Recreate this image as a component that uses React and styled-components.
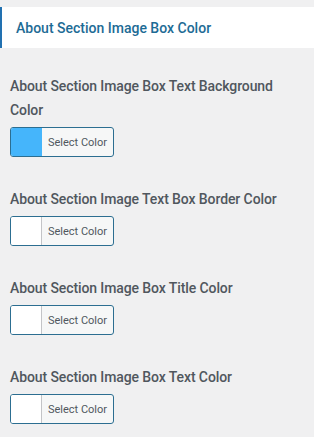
import React from "react";
import styled, { createGlobalStyle } from "styled-components";

const Global = createGlobalStyle`
  html, body {
    margin: 0;
    padding: 0;
    background: #f0f0f1;
  }
  body {
    font-family: Roboto, "Liberation Sans", Arial, sans-serif;
  }
`;

const Panel = styled.div`
  width: 314px;
  min-height: 437px;
  padding-top: 7px;
  box-sizing: border-box;
  background: #f0f0f1;
`;

const SectionHeader = styled.h3`
  margin: 0;
  height: 41px;
  display: flex;
  align-items: center;
  padding-left: 14px;
  background: #fff;
  border-left: 2px solid #2271b1;
  color: #1d6b95;
  font-size: 14px;
  font-weight: 500;
`;

const Controls = styled.div`
  display: flex;
  flex-direction: column;
  gap: 30px;
  padding: 26px 10px 0;
`;

const Control = styled.div`
  display: flex;
  flex-direction: column;
  align-items: flex-start;
  gap: 5px;
`;

const Label = styled.label`
  font-size: 14px;
  line-height: 24px;
  font-weight: 500;
  letter-spacing: -0.1px;
  color: #50575e;
  padding-right: 20px;
`;

const ColorButton = styled.button`
  display: flex;
  align-items: stretch;
  width: 104px;
  height: 30px;
  padding: 0;
  border: 1px solid #2c6e91;
  border-radius: 3px;
  background: #f6f7f7;
  overflow: hidden;
  cursor: pointer;
`;

const Swatch = styled.span`
  width: 30px;
  flex-shrink: 0;
  background: ${(p) => p.color || "#fff"};
  border-right: 1px solid ${(p) => (p.color ? p.color : "#c3c4c7")};
`;

const ButtonText = styled.span`
  flex: 1;
  display: flex;
  align-items: center;
  justify-content: center;
  font-family: Roboto, "Liberation Sans", Arial, sans-serif;
  font-size: 11px;
  color: #50575e;
`;

const controls = [
  { label: "About Section Image Box Text Background Color", color: "#45b5fb" },
  { label: "About Section Image Text Box Border Color" },
  { label: "About Section Image Box Title Color" },
  { label: "About Section Image Box Text Color" },
];

export default function App() {
  return (
    <Panel>
      <Global />
      <SectionHeader>About Section Image Box Color</SectionHeader>
      <Controls>
        {controls.map((c) => (
          <Control key={c.label}>
            <Label>{c.label}</Label>
            <ColorButton type="button">
              <Swatch color={c.color} />
              <ButtonText>Select Color</ButtonText>
            </ColorButton>
          </Control>
        ))}
      </Controls>
    </Panel>
  );
}
